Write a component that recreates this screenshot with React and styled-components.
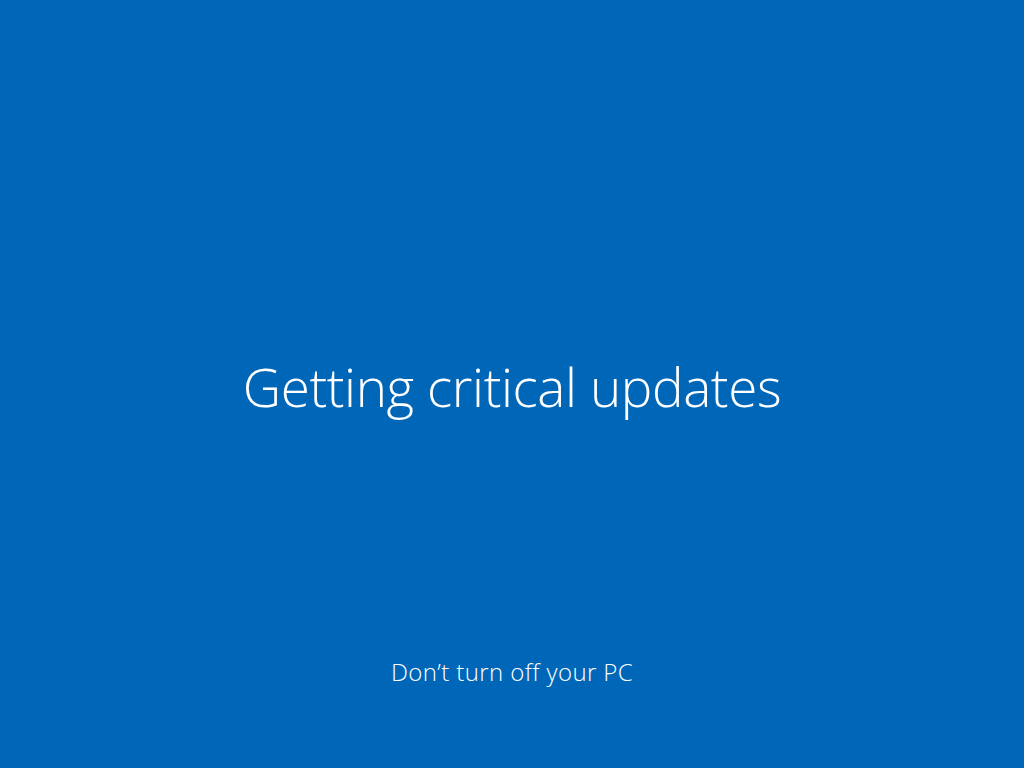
import React from "react";
import styled, { createGlobalStyle } from "styled-components";

const Global = createGlobalStyle`
  html, body {
    margin: 0;
    padding: 0;
    background: #0067b8;
  }
`;

const Screen = styled.div`
  height: 100vh;
  background-color: #0067b8;
  color: #ffffff;
  font-family: "Open Sans", "Noto Sans", sans-serif;
  font-weight: 300;
  display: flex;
  flex-direction: column;
  align-items: center;
  padding-top: 349px;
  box-sizing: border-box;
`;

const Title = styled.h1`
  margin: 0;
  font-size: 53px;
  font-weight: 300;
  line-height: 76px;
  letter-spacing: -0.4px;
`;

const Note = styled.div`
  margin-top: auto;
  margin-bottom: 80px;
  font-size: 24px;
  font-weight: 300;
  line-height: 32px;
  letter-spacing: 0.4px;
`;

const App = () => {
  return (
    <Screen>
      <Global />
      <Title>Getting critical updates</Title>
      <Note>Don’t turn off your PC</Note>
    </Screen>
  );
};
export default App;
